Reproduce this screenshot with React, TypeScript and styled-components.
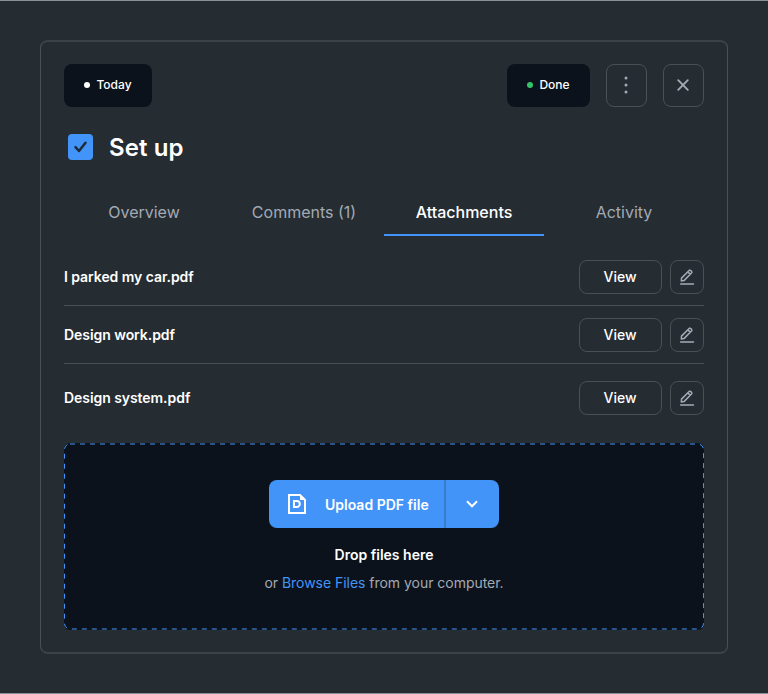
import React from 'react';
import styled, { createGlobalStyle, css } from 'styled-components';

const color = {
  page: '#252c32',
  deep: '#0c121b',
  line: '#495056',
  lineSoft: '#3b4248',
  blue: '#4294f8',
  text: '#ffffff',
  muted: '#a3aab4',
};

const GlobalStyle = createGlobalStyle`
  *, *::before, *::after { box-sizing: border-box; }
  body { margin: 0; background: ${color.page}; font-family: Inter, "Liberation Sans", sans-serif; }
  button { font: inherit; padding: 0; margin: 0; cursor: pointer; }
`;

const Page = styled.main`
  height: 694px;
  padding: 39px 40px;
  background: ${color.page};
  border-top: 1px solid #899197;
  border-bottom: 1px solid #899197;
`;

const Card = styled.section`
  display: flex;
  flex-direction: column;
  width: 688px;
  height: 614px;
  padding: 22px 23px;
  border: solid ${color.line};
  border-width: 2px 1px;
  border-top-color: ${color.lineSoft};
  border-bottom-color: ${color.lineSoft};
  border-radius: 8px;
`;

const Header = styled.header`
  display: flex;
  align-items: center;
  justify-content: space-between;
  height: 43px;
`;

const Actions = styled.div`
  display: flex;
  gap: 16px;
`;

const Chip = styled.span<{ $width: number }>`
  display: flex;
  align-items: center;
  justify-content: center;
  gap: 6px;
  width: ${(p) => p.$width}px;
  height: 43px;
  padding-bottom: 1px;
  border-radius: 8px;
  background: ${color.deep};
  color: ${color.text};
  font-size: 12px;
  font-weight: 500;
  line-height: 20px;
`;

const Dot = styled.i<{ $color: string }>`
  width: 6px;
  height: 6px;
  border-radius: 50%;
  background: ${(p) => p.$color};
`;

const outline = css`
  display: flex;
  align-items: center;
  justify-content: center;
  border: 1px solid ${color.line};
  border-radius: 8px;
  background: transparent;
  color: ${color.muted};
`;

const HeaderButton = styled.button`
  ${outline}
  width: 41px;
  height: 43px;
  padding: 0 1px 1px 0;
`;

const TitleRow = styled.div`
  display: flex;
  align-items: center;
  gap: 16px;
  height: 32px;
  margin-top: 24px;
  padding-left: 4px;
`;

const Checkbox = styled.span`
  display: flex;
  width: 25px;
  height: 26px;
  border-radius: 4px;
  background: ${color.blue};
`;

const Title = styled.h1`
  margin: 2px 0 0;
  color: ${color.text};
  font-size: 24px;
  font-weight: 600;
  line-height: 32px;
  letter-spacing: 0.1px;
`;

const Tabs = styled.nav`
  display: grid;
  grid-template-columns: repeat(4, 160px);
  height: 48px;
  margin-top: 25px;
`;

const Tab = styled.button<{ $active?: boolean }>`
  padding-top: 2px;
  border: 0;
  border-bottom: 2px solid ${(p) => (p.$active ? color.blue : 'transparent')};
  background: none;
  color: ${(p) => (p.$active ? color.text : color.muted)};
  font-size: 16px;
  font-weight: ${(p) => (p.$active ? 500 : 400)};
  line-height: 24px;
`;

const FileList = styled.ul`
  margin: 12px 0 0;
  padding: 0;
  list-style: none;
`;

const FileRow = styled.li<{ $height: number }>`
  display: flex;
  align-items: center;
  gap: 8px;
  height: ${(p) => p.$height}px;
  border-bottom: 1px solid ${color.line};
  &:last-child { border-bottom: 0; }
`;

const FileName = styled.span`
  flex: 1;
  color: ${color.text};
  font-size: 14px;
  font-weight: 600;
  line-height: 20px;
  letter-spacing: -0.06px;
`;

const ViewButton = styled.button`
  ${outline}
  width: 83px;
  height: 34px;
  padding: 0 1px 1px 0;
  color: ${color.text};
  font-size: 14px;
  font-weight: 500;
`;

const EditButton = styled.button`
  ${outline}
  width: 34px;
  height: 34px;
`;

const DropZone = styled.div`
  position: relative;
  display: flex;
  flex-direction: column;
  align-items: center;
  width: 640px;
  height: 187px;
  margin-top: 11px;
  padding-top: 37px;
  border-radius: 6px;
  background: ${color.deep};
`;

const DashedOutline = styled.svg`
  position: absolute;
  inset: 0;
  pointer-events: none;
`;

const SplitButton = styled.div`
  display: flex;
  width: 230px;
  height: 48px;
  border-radius: 8px;
  overflow: hidden;
`;

const UploadButton = styled.button`
  display: flex;
  align-items: center;
  gap: 18px;
  width: 175px;
  padding-left: 18px;
  border: 0;
  background: ${color.blue};
  color: ${color.text};
  font-size: 14px;
  font-weight: 600;
  white-space: nowrap;
`;

const MenuButton = styled.button`
  display: flex;
  flex: 1;
  align-items: center;
  justify-content: center;
  padding-right: 2px;
  border: 0;
  border-left: 2px solid #3c7cc6;
  background: ${color.blue};
  color: ${color.text};
`;

const DropTitle = styled.strong`
  margin-top: 17px;
  color: ${color.text};
  font-size: 14px;
  font-weight: 600;
  line-height: 20px;
`;

const DropHint = styled.p`
  margin: 8px 0 0;
  color: ${color.muted};
  font-size: 14px;
  line-height: 20px;
  letter-spacing: -0.03px;
`;

const Browse = styled.a`
  color: ${color.blue};
`;

const CheckIcon = () => (
  <svg width="25" height="26" viewBox="0 0 25 26" fill="none" stroke="#202b38" strokeWidth="2.5" strokeLinecap="round" strokeLinejoin="round">
    <path d="M7.5 13.2 L11 17 L17.5 8.8" />
  </svg>
);

const MoreIcon = () => (
  <svg width="24" height="24" viewBox="0 0 24 24" fill="currentColor">
    <circle cx="12" cy="5" r="1.5" />
    <circle cx="12" cy="12" r="1.5" />
    <circle cx="12" cy="19" r="1.5" />
  </svg>
);

const CloseIcon = () => (
  <svg width="24" height="24" viewBox="0 0 24 24" fill="none" stroke="currentColor" strokeWidth="1.9" strokeLinecap="round">
    <path d="M7.2 7.2 L16.8 16.8 M16.8 7.2 L7.2 16.8" />
  </svg>
);

const PencilIcon = () => (
  <svg width="16" height="18" viewBox="0 0 16 18" fill="none" stroke="currentColor" strokeWidth="1.5" strokeLinejoin="round" strokeLinecap="round">
    <path d="M2.3 13 L2.5 10.1 L10.1 2.5 Q10.9 1.7 11.8 2.6 L12.5 3.3 Q13.3 4.2 12.5 5 L5 12.6 Z M8.9 3.9 L11.2 6.2" />
    <path d="M1.6 16 H14.5" />
  </svg>
);

const PdfIcon = () => (
  <svg width="20" height="22" viewBox="0 0 20 22" fill="none" stroke="currentColor" strokeWidth="2">
    <path d="M2 2 H13 L18 7 V20 H2 Z" />
    <path d="M13 1 V7 H19 Z" fill="currentColor" stroke="none" />
    <path d="M7 8 H9.8 A3 3 0 0 1 9.8 14 H7 Z" />
  </svg>
);

const ChevronIcon = () => (
  <svg width="14" height="10" viewBox="0 0 14 10" fill="none" stroke="currentColor" strokeWidth="2">
    <path d="M2 2.3 L7 7.3 L12 2.3" />
  </svg>
);

const tabs = ['Overview', 'Comments (1)', 'Attachments', 'Activity'];

const files = [
  { name: 'I parked my car.pdf', height: 58 },
  { name: 'Design work.pdf', height: 58 },
  { name: 'Design system.pdf', height: 68 },
];

export default function App() {
  return (
    <>
      <GlobalStyle />
      <Page>
        <Card>
          <Header>
            <Chip $width={88}><Dot $color="#ffffff" />Today</Chip>
            <Actions>
              <Chip $width={83}><Dot $color="#34c36b" />Done</Chip>
              <HeaderButton aria-label="More"><MoreIcon /></HeaderButton>
              <HeaderButton aria-label="Close"><CloseIcon /></HeaderButton>
            </Actions>
          </Header>
          <TitleRow>
            <Checkbox><CheckIcon /></Checkbox>
            <Title>Set up</Title>
          </TitleRow>
          <Tabs>
            {tabs.map((label) => (
              <Tab key={label} $active={label === 'Attachments'}>{label}</Tab>
            ))}
          </Tabs>
          <FileList>
            {files.map((file) => (
              <FileRow key={file.name} $height={file.height}>
                <FileName>{file.name}</FileName>
                <ViewButton>View</ViewButton>
                <EditButton aria-label="Edit"><PencilIcon /></EditButton>
              </FileRow>
            ))}
          </FileList>
          <DropZone>
            <DashedOutline width="640" height="187" viewBox="0 0 640 187" fill="none">
              <rect x="0.5" y="1" width="639" height="185" rx="5.5" stroke={color.blue} strokeDasharray="5 5" />
            </DashedOutline>
            <SplitButton>
              <UploadButton><PdfIcon />Upload PDF file</UploadButton>
              <MenuButton aria-label="Upload options"><ChevronIcon /></MenuButton>
            </SplitButton>
            <DropTitle>Drop files here</DropTitle>
            <DropHint>or <Browse>Browse Files</Browse> from your computer.</DropHint>
          </DropZone>
        </Card>
      </Page>
    </>
  );
}
